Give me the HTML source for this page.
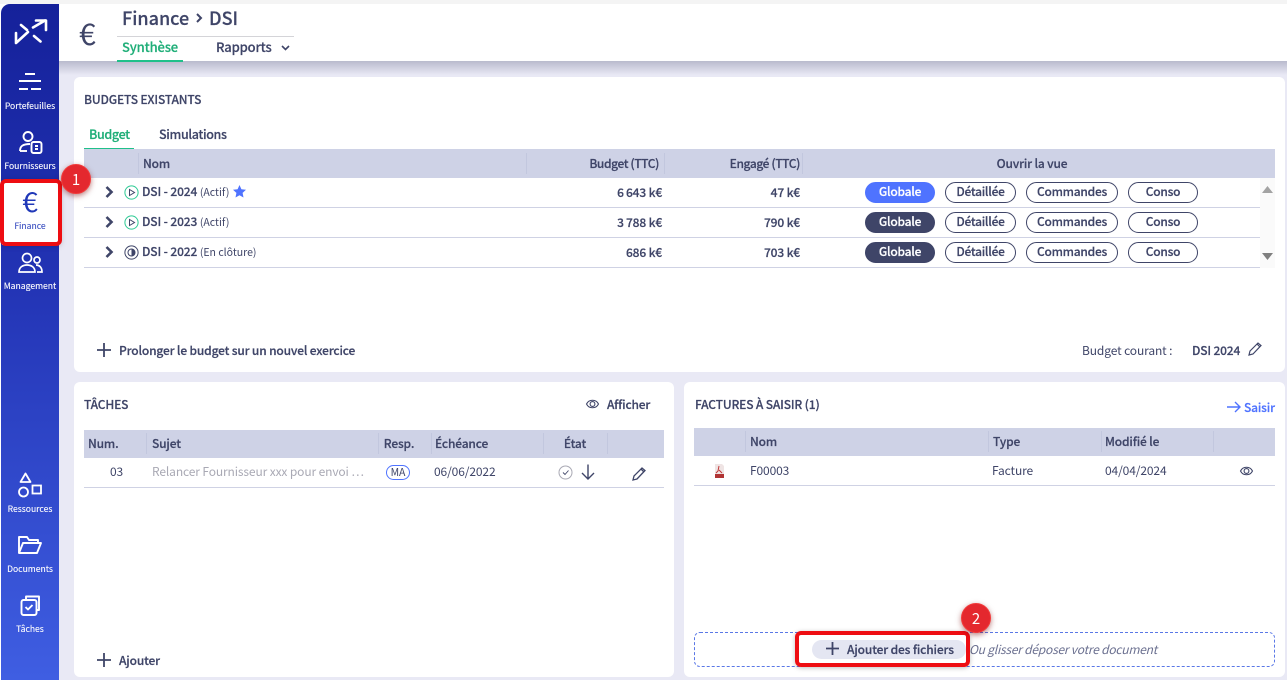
<!DOCTYPE html>
<html lang="fr"><head><meta charset="utf-8"><title>Finance DSI</title>
<style>
*{box-sizing:border-box}
html,body{margin:0;padding:0;width:1287px;height:680px;overflow:hidden;background:#fff}
body{position:relative;font-family:"Noto Sans CJK JP","Liberation Sans",sans-serif;color:#3f4568;font-size:12px;letter-spacing:-.12px}
.t{position:absolute;white-space:nowrap;line-height:16px;height:16px}
.b{font-weight:500;letter-spacing:-.16px;-webkit-text-stroke:.2px currentColor}
.abs{position:absolute}
.side{position:absolute;left:1px;top:4px;width:58px;height:676px;background:linear-gradient(180deg,#15219a 0%,#2233b4 40%,#3f5ee2 100%);border-top-left-radius:9px}
.nav{position:absolute;left:0;width:60px;text-align:center;color:#fff;font-size:8.6px;line-height:12px;white-space:nowrap;letter-spacing:0;-webkit-text-stroke:.1px currentColor}
.panel{position:absolute;background:#fff;border-radius:6px}
.thead{position:absolute;background:#ced2e6}
.sep{position:absolute;width:1px;background:#c2c7de}
.line{position:absolute;height:1px;background:#cfd2e4}
.pill{position:absolute;height:21px;border-radius:11px;border:1px solid #3f4568;text-align:center;line-height:18px;font-size:12px;font-weight:500;color:#3f4568;background:#fff;letter-spacing:-.25px;-webkit-text-stroke:.2px currentColor}
.pill.d{background:#3f4568;color:#fff}
.pill.a{background:#4f73ff;border-color:#4f73ff;color:#fff}
.r{text-align:right}
.c{text-align:center}
.s{font-size:10.5px;font-weight:400;letter-spacing:0;-webkit-text-stroke:0}
svg{position:absolute;overflow:visible}
.badge{position:absolute;width:30px;height:30px;border-radius:50%;background:#e4282e;box-shadow:0 2px 6px rgba(120,0,0,.5);color:#fff;text-align:center;line-height:29px;font-size:15px;border:1px solid #f23a3a}
</style></head><body>

<div class="abs" style="left:59px;top:61px;width:1228px;height:619px;background:#e9e9f5"></div>
<div class="abs" style="left:59px;top:61px;width:1228px;height:14px;background:linear-gradient(180deg,#b9bacd,#e9e9f5)"></div>
<div class="abs" style="left:0;top:0;width:1287px;height:4px;background:#f4f4f4"></div>
<div class="abs" style="left:59px;top:4px;width:1228px;height:57px;background:#fff"></div>

<div class="side"></div>
<svg style="left:0;top:0" width="60" height="50" fill="none" stroke="#fff" stroke-width="2.6" stroke-linecap="round" stroke-linejoin="round">
<path d="M16 33V43L28 32"/><path d="M33 27.500L45 20.500"/><path d="M36 20.500H46V30"/><path d="M21 25L27 30"/><path d="M34 36L40.500 41.500"/>
</svg>

<!-- Portefeuilles -->
<svg style="left:19px;top:72px" width="24" height="20" stroke="#fff" stroke-width="2" fill="none"><path d="M6 2H16M0 9H22M0 17H9M12 17H22"/></svg>
<div class="nav" style="top:100px">Portefeuilles</div>
<!-- Fournisseurs -->
<svg style="left:18px;top:130px" width="26" height="24" stroke="#fff" stroke-width="1.9" fill="none"><circle cx="10" cy="6.5" r="4.5"/><path d="M2 21C2 16 5 14 12 14"/><path d="M2 21H9"/><rect x="13.500" y="12" width="10" height="11" rx="2"/><path d="M17 16H20M17 19H20"/></svg>
<div class="nav" style="top:160px">Fournisseurs</div>

<!-- Finance active -->
<div class="abs" style="left:2px;top:181px;width:58px;height:64px;background:#fff;box-shadow:0 0 6px rgba(0,0,0,.3)"></div>
<div class="t c" style="left:2px;top:186px;width:56px;font-size:28px;line-height:30px;height:30px;color:#2038b8">€</div>
<div class="nav" style="top:220px;left:0;color:#3a4ec0">Finance</div>
<div class="abs" style="left:0;top:179px;width:62px;height:67px;border:4px solid #ee0d12;border-radius:6px"></div>

<!-- Management -->
<svg style="left:18px;top:252px" width="26" height="22" stroke="#fff" stroke-width="1.7" fill="none"><circle cx="9" cy="6" r="4.5"/><circle cx="19" cy="8" r="3"/><path d="M1 20C1 15 5 13 9 13S17 15 17 20Z"/><path d="M18 13C21 13 24 15 24 20H19"/></svg>
<div class="nav" style="top:280px">Management</div>
<!-- Ressources -->
<svg style="left:18px;top:472px" width="26" height="26" stroke="#fff" stroke-width="1.8" fill="none"><path d="M7.500 1.500L12.500 10H2.500Z" stroke-linejoin="round"/><circle cx="5.500" cy="20" r="4.500"/><rect x="14.500" y="13.500" width="8.500" height="8"/></svg>
<div class="nav" style="top:503px">Ressources</div>
<!-- Documents -->
<svg style="left:17px;top:535px" width="26" height="20" stroke="#fff" stroke-width="1.9" fill="none" stroke-linejoin="round"><path d="M2 18V2H10L12 5H21V8"/><path d="M2 18H20L24 8H6Z"/></svg>
<div class="nav" style="top:563px">Documents</div>
<!-- Taches -->
<svg style="left:20px;top:595px" width="22" height="22" stroke="#fff" stroke-width="1.9" fill="none" stroke-linejoin="round"><path d="M6 4V1.500H19V15H16.500"/><rect x="1.500" y="5" width="15" height="15" rx="2"/><path d="M5.500 12L8 14.500 12.500 10"/></svg>
<div class="nav" style="top:623px">Tâches</div>

<!-- Header -->
<div class="t" style="left:79px;top:17px;width:22px;height:30px;line-height:30px;font-size:30px;font-weight:400;color:#3f4568">€</div>
<div class="t b" style="left:122px;top:6px;font-size:18px;line-height:24px;height:24px;letter-spacing:0">Finance</div>
<svg style="left:195px;top:13px" width="8" height="10" fill="none" stroke="#3f4568" stroke-width="2"><path d="M2 1L6 5 2 9"/></svg>
<div class="t b" style="left:209px;top:6px;font-size:18px;line-height:24px;height:24px;letter-spacing:0">DSI</div>
<div class="abs" style="left:117px;top:36px;width:177px;height:1px;background:#d4d4d8"></div>
<div class="t b" style="left:122px;top:39px;font-size:13px;color:#1fae78">Synthèse</div>
<div class="abs" style="left:117px;top:60px;width:66px;height:2px;background:#20c08a"></div>
<div class="t b" style="left:216px;top:39px;font-size:13px">Rapports</div>
<svg style="left:281px;top:45px" width="9" height="6" fill="none" stroke="#3f4568" stroke-width="1.6"><path d="M1 1L4.500 4.500 8 1"/></svg>

<!-- Top panel -->
<div class="panel" style="left:74px;top:77px;width:1211px;height:295px"></div>
<div class="t b" style="left:84px;top:92px;font-size:12px">BUDGETS EXISTANTS</div>
<div class="t b" style="left:89px;top:126px;font-size:12.5px;color:#1fae78;letter-spacing:-.35px">Budget</div>
<div class="abs" style="left:84px;top:148px;width:50px;height:2px;background:#20c08a"></div>
<div class="t b" style="left:159px;top:126px;font-size:12.5px;letter-spacing:-.35px">Simulations</div>

<div class="thead" style="left:84px;top:149px;width:1191px;height:29px"></div>
<div class="sep" style="left:138px;top:153px;height:21px"></div>
<div class="sep" style="left:526px;top:153px;height:21px"></div>
<div class="sep" style="left:664px;top:153px;height:21px"></div>
<div class="sep" style="left:802px;top:153px;height:21px"></div>
<div class="t b" style="left:143px;top:156px">Nom</div>
<div class="t b r" style="left:530px;top:156px;width:129px;letter-spacing:-.4px">Budget (TTC)</div>
<div class="t b r" style="left:670px;top:156px;width:130px;letter-spacing:-.4px">Engagé (TTC)</div>
<div class="t b c" style="left:802px;top:156px;width:460px">Ouvrir la vue</div>

<div class="line" style="left:84px;top:207px;width:1176px"></div>
<div class="line" style="left:84px;top:237px;width:1176px"></div>
<div class="line" style="left:84px;top:267px;width:1176px"></div>

<!-- rows -->
<svg style="left:105px;top:186px" width="9" height="12" fill="none" stroke="#3f4568" stroke-width="2.6"><path d="M1.500 1L6.500 6 1.500 11"/></svg>
<svg style="left:105px;top:216px" width="9" height="12" fill="none" stroke="#3f4568" stroke-width="2.6"><path d="M1.500 1L6.500 6 1.500 11"/></svg>
<svg style="left:105px;top:246px" width="9" height="12" fill="none" stroke="#3f4568" stroke-width="2.6"><path d="M1.500 1L6.500 6 1.500 11"/></svg>

<svg style="left:124px;top:185px" width="15" height="15" fill="none"><circle cx="7.500" cy="7.500" r="6.600" stroke="#2ecb95" stroke-width="1"/><path d="M5.500 4.500V10.500L10.500 7.500Z" stroke="#3f4568"/></svg>
<svg style="left:124px;top:215px" width="15" height="15" fill="none"><circle cx="7.500" cy="7.500" r="6.600" stroke="#2ecb95" stroke-width="1"/><path d="M5.500 4.500V10.500L10.500 7.500Z" stroke="#3f4568"/></svg>
<svg style="left:124px;top:245px" width="15" height="15" fill="none"><circle cx="7.500" cy="7.500" r="6.600" stroke="#3f4568" stroke-width="1"/><circle cx="7.500" cy="7.500" r="3.500" stroke="#3f4568"/><path d="M7.500 4A3.500 3.500 0 0 1 7.500 11Z" fill="#3f4568"/></svg>

<div class="t b" style="left:142px;top:184px;letter-spacing:-.12px">DSI - 2024 <span class="s">(Actif)</span></div>
<svg style="left:233px;top:185px" width="13" height="13" fill="#4f73ff"><path d="M6.500 0L8.400 4.300 13 4.800 9.600 7.900 10.500 12.500 6.500 10.200 2.500 12.500 3.400 7.900 0 4.800 4.600 4.300Z"/></svg>
<div class="t b" style="left:142px;top:214px;letter-spacing:-.12px">DSI - 2023 <span class="s">(Actif)</span></div>
<div class="t b" style="left:142px;top:244px;letter-spacing:-.12px">DSI - 2022 <span class="s">(En clôture)</span></div>

<div class="t b r" style="left:560px;top:185px;width:102px">6&#8201;643 k€</div>
<div class="t b r" style="left:560px;top:215px;width:102px">3&#8201;788 k€</div>
<div class="t b r" style="left:560px;top:245px;width:102px">686 k€</div>
<div class="t b r" style="left:700px;top:185px;width:100px">47 k€</div>
<div class="t b r" style="left:700px;top:215px;width:100px">790 k€</div>
<div class="t b r" style="left:700px;top:245px;width:100px">703 k€</div>

<div class="pill a" style="left:865px;top:182px;width:70px">Globale</div>
<div class="pill" style="left:945px;top:182px;width:71px">Détaillée</div>
<div class="pill" style="left:1026px;top:182px;width:92px">Commandes</div>
<div class="pill" style="left:1128px;top:182px;width:70px">Conso</div>
<div class="pill d" style="left:865px;top:212px;width:70px">Globale</div>
<div class="pill" style="left:945px;top:212px;width:71px">Détaillée</div>
<div class="pill" style="left:1026px;top:212px;width:92px">Commandes</div>
<div class="pill" style="left:1128px;top:212px;width:70px">Conso</div>
<div class="pill d" style="left:865px;top:242px;width:70px">Globale</div>
<div class="pill" style="left:945px;top:242px;width:71px">Détaillée</div>
<div class="pill" style="left:1026px;top:242px;width:92px">Commandes</div>
<div class="pill" style="left:1128px;top:242px;width:70px">Conso</div>

<div class="abs" style="left:1260px;top:178px;width:15px;height:90px;background:#fafafa"></div>
<svg style="left:1262px;top:186px" width="11" height="7" fill="#a3a3a3"><path d="M5.500 0L11 7H0Z"/></svg>
<svg style="left:1262px;top:253px" width="11" height="7" fill="#7f7f7f"><path d="M0 0H11L5.500 7Z"/></svg>

<svg style="left:97px;top:343px" width="14" height="14" stroke="#3f4568" stroke-width="1.8"><path d="M7 0V14M0 7H14"/></svg>
<div class="t b" style="left:119px;top:343px">Prolonger le budget sur un nouvel exercice</div>
<div class="t" style="left:1082px;top:343px">Budget courant :</div>
<div class="t b" style="left:1192px;top:343px">DSI 2024</div>
<svg style="left:1248px;top:342px" width="14" height="14" fill="none" stroke="#3f4568" stroke-width="1.2"><path d="M1 13L2 9 10 1 13 3.500 5 12Z"/><path d="M9 2L12 5"/></svg>

<!-- Taches panel -->
<div class="panel" style="left:74px;top:382px;width:600px;height:295px"></div>
<div class="t b" style="left:84px;top:397px">TÂCHES</div>
<svg style="left:586px;top:398px" width="13" height="12" fill="none" stroke="#3f4568" stroke-width="1.1"><path d="M.5 6C3 1 10 1 12.500 6 10 11 3 11 .5 6Z"/><circle cx="6.500" cy="6" r="2.400"/></svg>
<div class="t b" style="left:607px;top:397px">Afficher</div>

<div class="thead" style="left:84px;top:430px;width:580px;height:28px"></div>
<div class="sep" style="left:146px;top:433px;height:21px"></div>
<div class="sep" style="left:431px;top:433px;height:21px"></div>
<div class="sep" style="left:543px;top:433px;height:21px"></div>
<div class="sep" style="left:607px;top:433px;height:21px"></div>
<div class="sep" style="left:378px;top:433px;height:21px"></div>
<div class="t b" style="left:88px;top:436px">Num.</div>
<div class="t b" style="left:152px;top:436px">Sujet</div>
<div class="t b c" style="left:373px;top:436px;width:52px">Resp.</div>
<div class="t b" style="left:435px;top:436px">Échéance</div>
<div class="t b c" style="left:543px;top:436px;width:64px">État</div>

<div class="t c" style="left:84px;top:464px;width:65px">03</div>
<div class="t" style="left:152px;top:464px;color:#a9a9b4;width:216px;overflow:hidden">Relancer Fournisseur xxx pour envoi …</div>
<div class="abs" style="left:386px;top:465px;width:24px;height:15px;border:1px solid #4f73ff;border-radius:8px;text-align:center;font-size:10.5px;line-height:13px">MA</div>
<div class="t" style="left:434px;top:464px">06/06/2022</div>
<svg style="left:558px;top:465px" width="15" height="15" fill="none"><circle cx="7.500" cy="7.500" r="6.500" stroke="#a9a9b4"/><path d="M5 7.500L7 9.500 10.500 5.500" stroke="#3f4568" stroke-width=".9"/></svg>
<svg style="left:581px;top:464px" width="14" height="16" fill="none" stroke="#3f4568" stroke-width="1.4"><path d="M7 .5V15M1 9L7 15 13 9"/></svg>
<svg style="left:632px;top:467px" width="14" height="14" fill="none" stroke="#3f4568" stroke-width="1.300"><path d="M1 13L2 9 10 1 13 3.500 5 12Z"/><path d="M9 2L12 5"/></svg>
<div class="line" style="left:84px;top:487px;width:580px"></div>

<svg style="left:97px;top:653px" width="14" height="14" stroke="#3f4568" stroke-width="1.8"><path d="M7 0V14M0 7H14"/></svg>
<div class="t b" style="left:119px;top:653px">Ajouter</div>

<!-- Factures panel -->
<div class="panel" style="left:684px;top:382px;width:601px;height:295px"></div>
<div class="t b" style="left:695px;top:397px">FACTURES À SAISIR (1)</div>
<svg style="left:1227px;top:401px" width="14" height="12" fill="none" stroke="#4f73ff" stroke-width="1.4"><path d="M0 6H13M8 1L13 6 8 11"/></svg>
<div class="t b" style="left:1244px;top:400px;color:#4f73ff">Saisir</div>

<div class="thead" style="left:694px;top:428px;width:581px;height:28px"></div>
<div class="sep" style="left:745px;top:431px;height:21px"></div>
<div class="sep" style="left:988px;top:431px;height:21px"></div>
<div class="sep" style="left:1101px;top:431px;height:21px"></div>
<div class="sep" style="left:1213px;top:431px;height:21px"></div>
<div class="t b" style="left:750px;top:434px">Nom</div>
<div class="t b" style="left:993px;top:434px">Type</div>
<div class="t b" style="left:1105px;top:434px">Modifié le</div>

<svg style="left:714px;top:464px" width="11" height="15"><path d="M1 0H8L10 2V14H1Z" fill="#efe4e4"/><path d="M5 2L4 7 2 9M5 6L8 9" stroke="#c23a3a" fill="none"/><rect x="1" y="10" width="9" height="4" fill="#b13434"/></svg>
<div class="t" style="left:750px;top:463px">F00003</div>
<div class="t" style="left:992px;top:463px">Facture</div>
<div class="t" style="left:1105px;top:463px">04/04/2024</div>
<svg style="left:1240px;top:465px" width="13" height="12" fill="none" stroke="#3f4568" stroke-width="1.1"><path d="M.5 6C3 1 10 1 12.500 6 10 11 3 11 .5 6Z"/><circle cx="6.500" cy="6" r="2.400"/></svg>
<div class="line" style="left:694px;top:485px;width:581px"></div>

<!-- drop zone -->
<div class="abs" style="left:694px;top:632px;width:581px;height:35px;border:1px dashed #5a78e6;border-radius:6px"></div>
<div class="abs" style="left:812px;top:640px;width:154px;height:19px;background:#e4e6f2;border-radius:10px"></div>
<svg style="left:826px;top:642px" width="13" height="13" stroke="#3f4568" stroke-width="1.8"><path d="M6.500 0V13M0 6.500H13"/></svg>
<div class="t b" style="left:847px;top:642px;letter-spacing:-.14px">Ajouter des fichiers</div>
<div class="t" style="left:969px;top:642px;font-style:italic;color:#6b7090;letter-spacing:-.22px">Ou glisser déposer votre document</div>
<div class="abs" style="left:795px;top:631px;width:175px;height:36px;border:4px solid #ee0d12;border-radius:6px;box-shadow:0 1px 5px rgba(0,0,0,.25)"></div>

<div class="badge" style="left:61px;top:164px">1</div>
<div class="badge" style="left:961px;top:603px">2</div>

</body></html>
